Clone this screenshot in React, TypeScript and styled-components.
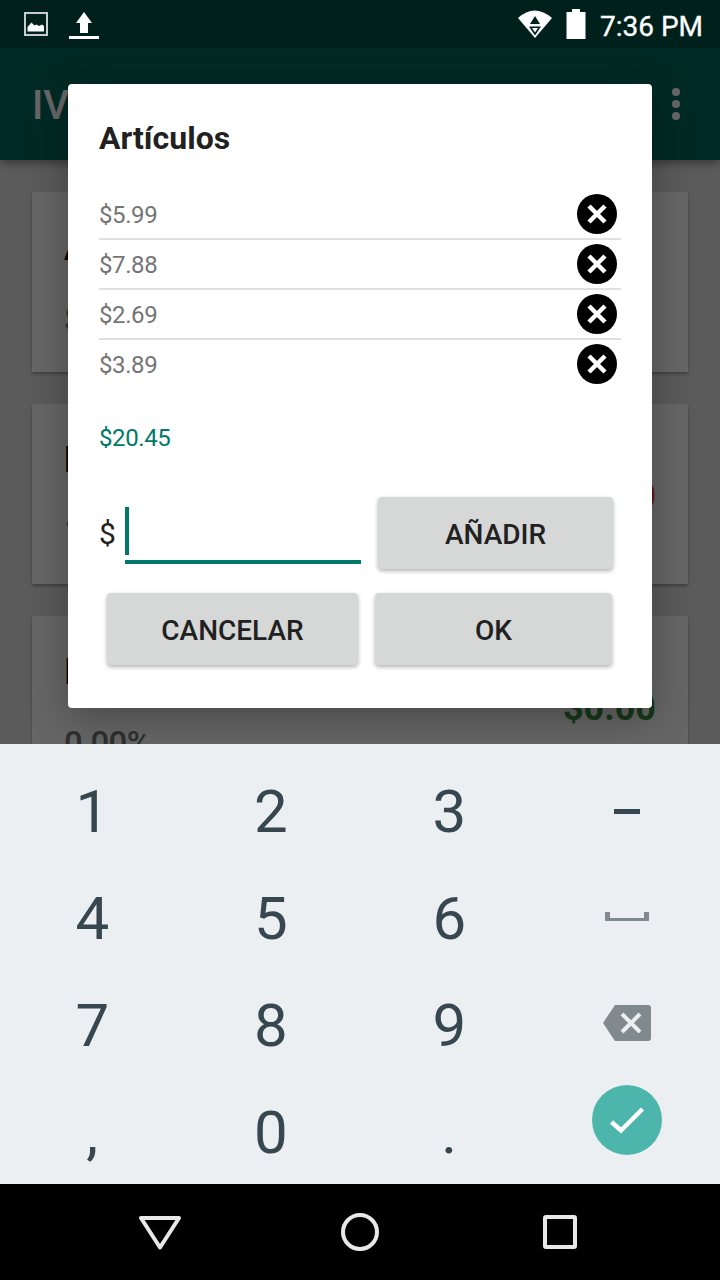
import React from 'react';
import styled, { createGlobalStyle } from 'styled-components';

const Global = createGlobalStyle`
  html, body { margin: 0; padding: 0; background: #000; }
  * { box-sizing: border-box; }
  body { font-family: Roboto, "Liberation Sans", sans-serif; }
`;

const Screen = styled.div`
  width: 720px;
  height: 1280px;
  display: flex;
  flex-direction: column;
  overflow: hidden;
`;

const Upper = styled.div`
  position: relative;
  height: 744px;
  display: flex;
  flex-direction: column;
  overflow: hidden;
`;

const StatusBar = styled.div`
  position: relative;
  z-index: 3;
  height: 48px;
  flex: none;
  background: #00201c;
  display: flex;
  align-items: center;
  color: #fff;
`;

const StatusLeft = styled.div`
  display: flex;
  align-items: center;
  padding-left: 24px;
  gap: 21px;
`;

const StatusRight = styled.div`
  margin-left: auto;
  display: flex;
  align-items: center;
  padding-right: 17px;
`;

const Clock = styled.span`
  font-size: 28px;
  line-height: 48px;
  margin-left: 14px;
  padding-top: 5px;
  -webkit-text-stroke: 0.3px #fff;
`;

const Toolbar = styled.div`
  height: 112px;
  flex: none;
  background: #00695c;
  display: flex;
  align-items: center;
  justify-content: space-between;
  padding: 0 40px 0 32px;
  box-shadow: 0 4px 8px rgba(0, 0, 0, 0.35);
  position: relative;
  z-index: 1;
`;

const ToolbarTitle = styled.span`
  font-size: 40px;
  font-weight: 500;
  color: #fff;
  padding-top: 2px;
`;

const Overflow = styled.div`
  display: flex;
  flex-direction: column;
  gap: 4px;
`;

const OverflowDot = styled.i`
  display: block;
  width: 8px;
  height: 8px;
  border-radius: 50%;
  background: #fff;
`;

const Content = styled.div`
  flex: 1;
  min-height: 0;
  background: #e4e4e4;
  padding: 32px 32px 0;
  display: flex;
  flex-direction: column;
  gap: 32px;
`;

const Card = styled.div`
  height: 180px;
  flex: none;
  background: #fff;
  box-shadow: 0 2px 3px rgba(0, 0, 0, 0.3);
  padding: 4px 32px 0;
  display: flex;
  justify-content: space-between;
  align-items: center;
`;

const CardLeft = styled.div`
  display: flex;
  flex-direction: column;
  gap: 32px;
`;

const CardTitle = styled.span`
  font-size: 36px;
  font-weight: 700;
  color: #000;
  line-height: 40px;
`;

const CardSub = styled.span`
  font-size: 33px;
  font-weight: 500;
  letter-spacing: -0.7px;
  color: #777;
  line-height: 40px;
`;

const CardValue = styled.span<{ $color: string }>`
  font-size: 36px;
  font-weight: 700;
  color: ${(p) => p.$color};
`;

const Scrim = styled.div`
  position: absolute;
  inset: 0;
  z-index: 2;
  background: rgba(0, 0, 0, 0.6);
`;

const Dialog = styled.div`
  position: absolute;
  z-index: 2;
  left: 68px;
  top: 84px;
  width: 584px;
  height: 624px;
  background: #fff;
  border-radius: 4px;
  box-shadow: 0 10px 40px rgba(0, 0, 0, 0.3);
  padding: 0 31px;
  display: flex;
  flex-direction: column;
`;

const DialogTitle = styled.h2`
  margin: 0;
  padding-top: 35px;
  font-size: 32px;
  line-height: 38px;
  font-weight: 700;
  color: #212121;
`;

const ItemList = styled.div`
  margin-top: 33px;
  display: flex;
  flex-direction: column;
`;

const Item = styled.div<{ $last?: boolean }>`
  height: 50px;
  display: flex;
  align-items: center;
  justify-content: space-between;
  padding-right: 4px;
  border-bottom: 2px solid ${(p) => (p.$last ? 'transparent' : '#e0e0e0')};
`;

const ItemPrice = styled.span`
  font-size: 24px;
  letter-spacing: -0.4px;
  padding-top: 2px;
  color: #757575;
`;

const RemoveButton = styled.span`
  width: 40px;
  height: 40px;
  display: block;
  border-radius: 50%;
  background: #000;
`;

const Total = styled.div`
  margin-top: 33px;
  font-size: 24px;
  letter-spacing: -0.4px;
  line-height: 30px;
  color: #00796b;
`;

const InputRow = styled.div`
  margin-top: 44px;
  display: flex;
  align-items: flex-start;
`;

const Currency = styled.span`
  width: 26px;
  margin-top: 15px;
  font-size: 30px;
  line-height: 44px;
  color: #212121;
`;

const AmountField = styled.div`
  width: 236px;
  height: 57px;
  margin-top: 10px;
  border-bottom: 4px solid #00796b;
`;

const Caret = styled.div`
  width: 4px;
  height: 48px;
  background: #00796b;
`;

const RaisedButton = styled.button<{ $w: number }>`
  width: ${(p) => p.$w}px;
  height: 72px;
  flex: none;
  border: 0;
  padding: 2px 0 0;
  border-radius: 4px;
  background: #d6d7d7;
  box-shadow: 0 2px 4px rgba(0, 0, 0, 0.3);
  font-family: inherit;
  font-size: 28px;
  font-weight: 500;
  color: #212121;
`;

const AddButton = styled(RaisedButton)`
  margin-left: 17px;
`;

const ActionRow = styled.div`
  margin-top: 24px;
  padding-left: 8px;
  display: flex;
  gap: 17px;
`;

const Keyboard = styled.div`
  height: 440px;
  flex: none;
  background: #ebeff2;
  padding: 14px 3px 0;
  display: grid;
  grid-template-columns: repeat(4, 1fr);
  grid-auto-rows: 107px;
  overflow: hidden;
`;

const Key = styled.div<{ $lift?: number; $action?: boolean }>`
  display: flex;
  align-items: center;
  justify-content: center;
  padding-bottom: ${(p) => (p.$lift ?? 0) * 2}px;
  padding-right: ${(p) => (p.$action ? 2 : 0)}px;
  font-size: 60px;
  font-weight: 400;
  color: #37474f;
`;

const DoneCircle = styled.div`
  width: 70px;
  height: 70px;
  border-radius: 50%;
  background: #4db6ac;
  display: flex;
  align-items: center;
  justify-content: center;
`;

const NavBar = styled.div`
  height: 96px;
  flex: none;
  background: #000;
  padding-left: 60px;
  display: grid;
  grid-template-columns: repeat(3, 200px);
  justify-items: center;
  align-items: center;
`;

const NavSlot = styled.div`
  display: flex;
`;

const BatteryIcon = styled.svg`
  margin-left: 13px;
`;

const XIcon = () => (
  <svg width="40" height="40" viewBox="0 0 40 40">
    <path d="M12 12 L28 28 M28 12 L12 28" stroke="#fff" strokeWidth="4.5" fill="none" />
  </svg>
);

const items = ['$5.99', '$7.88', '$2.69', '$3.89'];

type KeyDef = { label?: string; icon?: 'minus' | 'space' | 'back' | 'done'; lift?: number };

const keys: KeyDef[] = [
  { label: '1' },
  { label: '2' },
  { label: '3' },
  { icon: 'minus', lift: 0 },
  { label: '4' },
  { label: '5' },
  { label: '6' },
  { icon: 'space', lift: 2 },
  { label: '7' },
  { label: '8' },
  { label: '9' },
  { icon: 'back', lift: 3 },
  { label: ',' },
  { label: '0' },
  { label: '.' },
  { icon: 'done', lift: 13 },
];

const KeyIcon = ({ name }: { name: NonNullable<KeyDef['icon']> }) => {
  if (name === 'minus')
    return (
      <svg width="26" height="5" viewBox="0 0 26 5">
        <rect width="26" height="5" fill="#37474f" />
      </svg>
    );
  if (name === 'space')
    return (
      <svg width="44" height="10" viewBox="0 0 44 10">
        <path d="M0 0h5v6h34V0h5v9H0z" fill="#80898e" />
      </svg>
    );
  if (name === 'back')
    return (
      <svg width="48" height="36" viewBox="0 0 48 36">
        <path d="M12 0H45a3 3 0 0 1 3 3V33a3 3 0 0 1-3 3H12L0 18z" fill="#80898e" />
        <path d="M19 9L37 27M37 9L19 27" stroke="#ebeff2" strokeWidth="4" fill="none" />
      </svg>
    );
  return (
    <DoneCircle>
      <svg width="38" height="30" viewBox="0 0 38 30">
        <path d="M3.5 17L13 25.5L34.5 4" stroke="#fff" strokeWidth="4.5" fill="none" />
      </svg>
    </DoneCircle>
  );
};

export default function App() {
  return (
    <Screen>
      <Global />
      <Upper>
        <StatusBar>
          <StatusLeft>
            <svg width="24" height="24" viewBox="0 0 24 24">
              <rect x="1" y="1" width="22" height="22" fill="none" stroke="#c8cccc" strokeWidth="2" />
              <path d="M3.5 19.5V15l4-4.5 3 3 2-1 2.5 1.5 3-1.5 2 1.5v5.5z" fill="#fff" />
            </svg>
            <svg width="30" height="30" viewBox="0 0 30 30">
              <path d="M15 3L23 14H19V24H11V14H7z" fill="#fff" />
              <rect x="0" y="27" width="30" height="3" fill="#fff" />
            </svg>
          </StatusLeft>
          <StatusRight>
            <svg width="36" height="28" viewBox="0 0 36 28">
              <path d="M1 8Q17.5 -7 35 8L18 28z" fill="#fff" />
              <path d="M18 6L23 14H13z" fill="#00201c" />
              <path d="M12 16.5H24L18 25.5z" fill="#00201c" />
              <path d="M15 18H21L18 22.5z" fill="#fff" />
            </svg>
            <BatteryIcon width="20" height="30" viewBox="0 0 20 30">
              <path d="M6 0H14V3H19.5V30H.5V3H6z" fill="#fff" />
            </BatteryIcon>
            <Clock>7:36 PM</Clock>
          </StatusRight>
        </StatusBar>
        <Toolbar>
          <ToolbarTitle>IVA</ToolbarTitle>
          <Overflow>
            <OverflowDot />
            <OverflowDot />
            <OverflowDot />
          </Overflow>
        </Toolbar>
        <Content>
          <Card>
            <CardLeft>
              <CardTitle>Artículos</CardTitle>
              <CardSub>$20.45</CardSub>
            </CardLeft>
          </Card>
          <Card>
            <CardLeft>
              <CardTitle>Descuento</CardTitle>
              <CardSub>10.00%</CardSub>
            </CardLeft>
            <CardValue $color="#f44336">$2.00</CardValue>
          </Card>
          <Card>
            <CardLeft>
              <CardTitle>Impuesto</CardTitle>
              <CardSub>0.00%</CardSub>
            </CardLeft>
            <CardValue $color="#388e3c">$0.00</CardValue>
          </Card>
        </Content>
        <Scrim />
        <Dialog>
          <DialogTitle>Artículos</DialogTitle>
          <ItemList>
            {items.map((p, i) => (
              <Item key={p} $last={i === items.length - 1}>
                <ItemPrice>{p}</ItemPrice>
                <RemoveButton>
                  <XIcon />
                </RemoveButton>
              </Item>
            ))}
          </ItemList>
          <Total>$20.45</Total>
          <InputRow>
            <Currency>$</Currency>
            <AmountField>
              <Caret />
            </AmountField>
            <AddButton $w={235}>AÑADIR</AddButton>
          </InputRow>
          <ActionRow>
            <RaisedButton $w={251}>CANCELAR</RaisedButton>
            <RaisedButton $w={237}>OK</RaisedButton>
          </ActionRow>
        </Dialog>
      </Upper>
      <Keyboard>
        {keys.map((k, i) => (
          <Key key={i} $lift={k.lift} $action={!!k.icon}>
            {k.icon ? <KeyIcon name={k.icon} /> : k.label}
          </Key>
        ))}
      </Keyboard>
      <NavBar>
        <NavSlot>
          <svg width="42" height="36" viewBox="0 0 42 36">
            <path d="M2 4H40L21 33.5z" stroke="#e8e8e8" strokeWidth="4" fill="none" strokeLinejoin="round" />
          </svg>
        </NavSlot>
        <NavSlot>
          <svg width="38" height="38" viewBox="0 0 38 38">
            <circle cx="19" cy="19" r="17" stroke="#e8e8e8" strokeWidth="4" fill="none" />
          </svg>
        </NavSlot>
        <NavSlot>
          <svg width="34" height="34" viewBox="0 0 34 34">
            <rect x="2" y="2" width="30" height="30" rx="1" stroke="#e8e8e8" strokeWidth="4" fill="none" />
          </svg>
        </NavSlot>
      </NavBar>
    </Screen>
  );
}
